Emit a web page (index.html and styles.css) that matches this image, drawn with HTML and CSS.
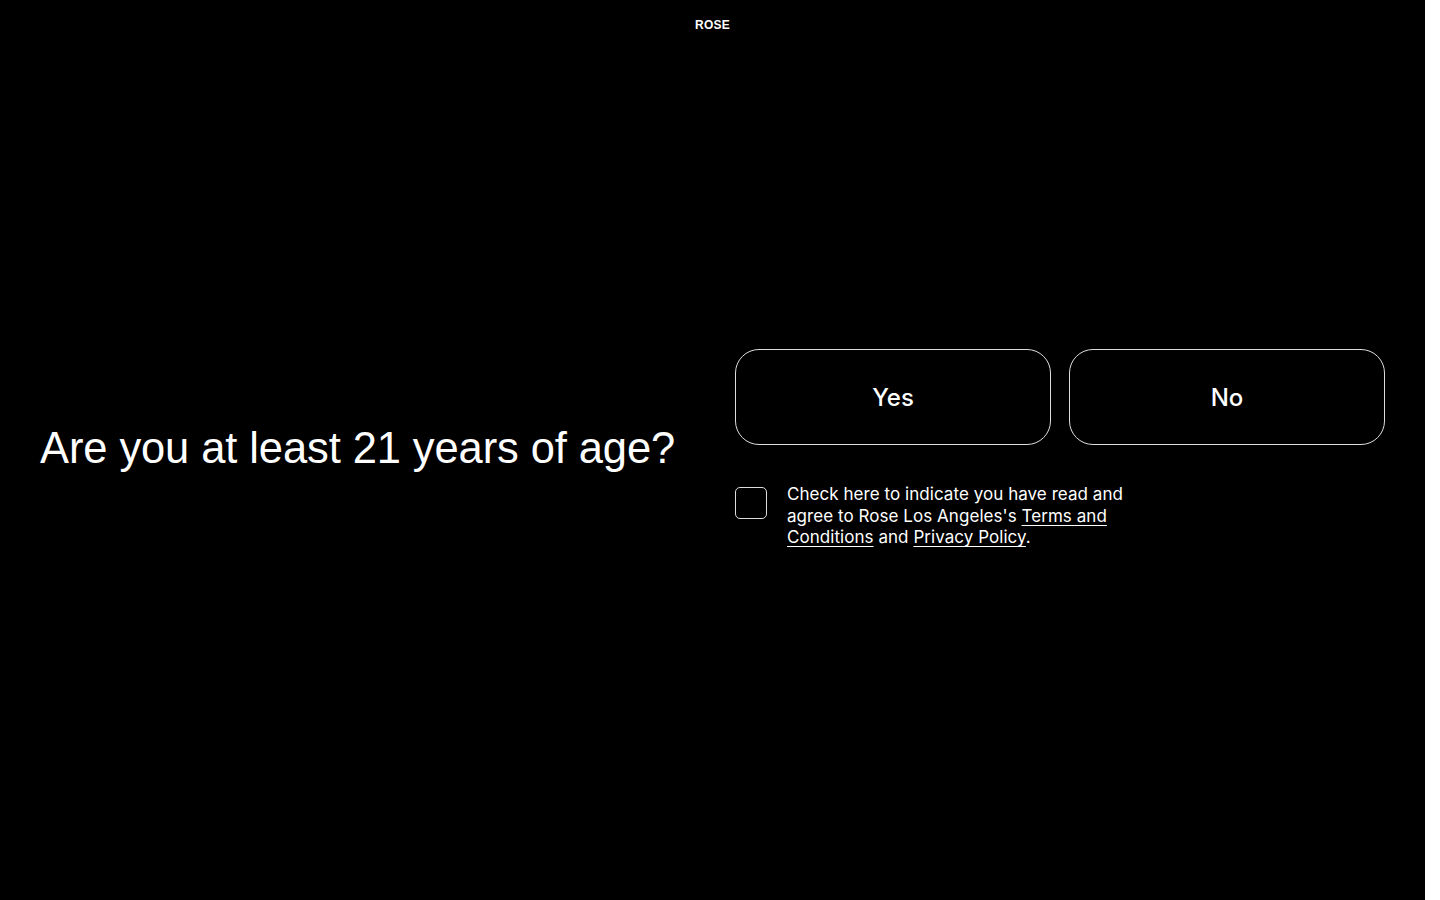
FILE: index.html
```html
<!DOCTYPE html>
<html lang="en">
<head>
    <meta charset="UTF-8">
    <meta name="viewport" content="width=device-width, initial-scale=1.0">
    <title>Rose Los Angeles</title>
    <link rel="stylesheet" href="styles.css">
</head>
<body>
    <div id="page">
        <header class="site-header">
            <span class="logo">ROSE</span>
        </header>
        <main class="age-gate">
            <h1 class="age-question">Are you at least 21 years of age?</h1>
            <div class="age-actions">
                <div class="answer-row">
                    <button type="button" class="answer-btn">Yes</button>
                    <button type="button" class="answer-btn">No</button>
                </div>
                <label class="agree">
                    <input type="checkbox" class="agree-box">
                    <span class="agree-text">Check here to indicate you have read and agree to Rose Los Angeles's <a href="#">Terms and Conditions</a> and <a href="#">Privacy Policy</a>.</span>
                </label>
            </div>
        </main>
    </div>
</body>
</html>
```

FILE: styles.css
```css
html {
    background-color: #fff;
}
body {
    margin: 0;
    font-family: "Liberation Sans", Arial, sans-serif;
    color: #fff;
}
#page {
    width: 1425px;
    height: 900px;
    background-color: #000;
    display: flex;
    flex-direction: column;
}
.site-header {
    height: 50px;
    display: flex;
    justify-content: center;
    align-items: center;
}
.logo {
    font-size: 12px;
    font-weight: bold;
    letter-spacing: 0.2px;
}
.age-gate {
    flex: 1;
    margin-bottom: 54px;
    padding: 0 40px;
    display: grid;
    grid-template-columns: 1fr 650px;
    column-gap: 45px;
    align-items: center;
}
.age-question {
    margin: 0;
    font-size: 43.5px;
    font-weight: normal;
    letter-spacing: -0.1px;
    line-height: 1.2;
}
.age-actions {
    display: flex;
    flex-direction: column;
    gap: 42px;
    padding-top: 2px;
}
.answer-row {
    display: grid;
    grid-template-columns: 1fr 1fr;
    gap: 18px;
}
.answer-btn {
    height: 96px;
    background: #000;
    color: #fff;
    border: 1px solid #ddd;
    border-radius: 24px;
    font-family: Inter, "Liberation Sans", sans-serif;
    font-size: 24px;
    font-weight: 500;
    cursor: pointer;
}
.agree {
    display: flex;
    align-items: flex-start;
    gap: 20px;
    font-family: Inter, "Liberation Sans", sans-serif;
    font-size: 17px;
    line-height: 21.5px;
    letter-spacing: 0.05px;
}
.agree-box {
    appearance: none;
    margin: 0;
    width: 32px;
    height: 32px;
    border: 1px solid #ddd;
    border-radius: 5px;
    background: #000;
    flex-shrink: 0;
}
.agree-text {
    width: 346px;
    margin-top: -3px;
}
.agree-text a {
    color: #fff;
    text-decoration: underline;
    text-underline-offset: 3px;
}
```
